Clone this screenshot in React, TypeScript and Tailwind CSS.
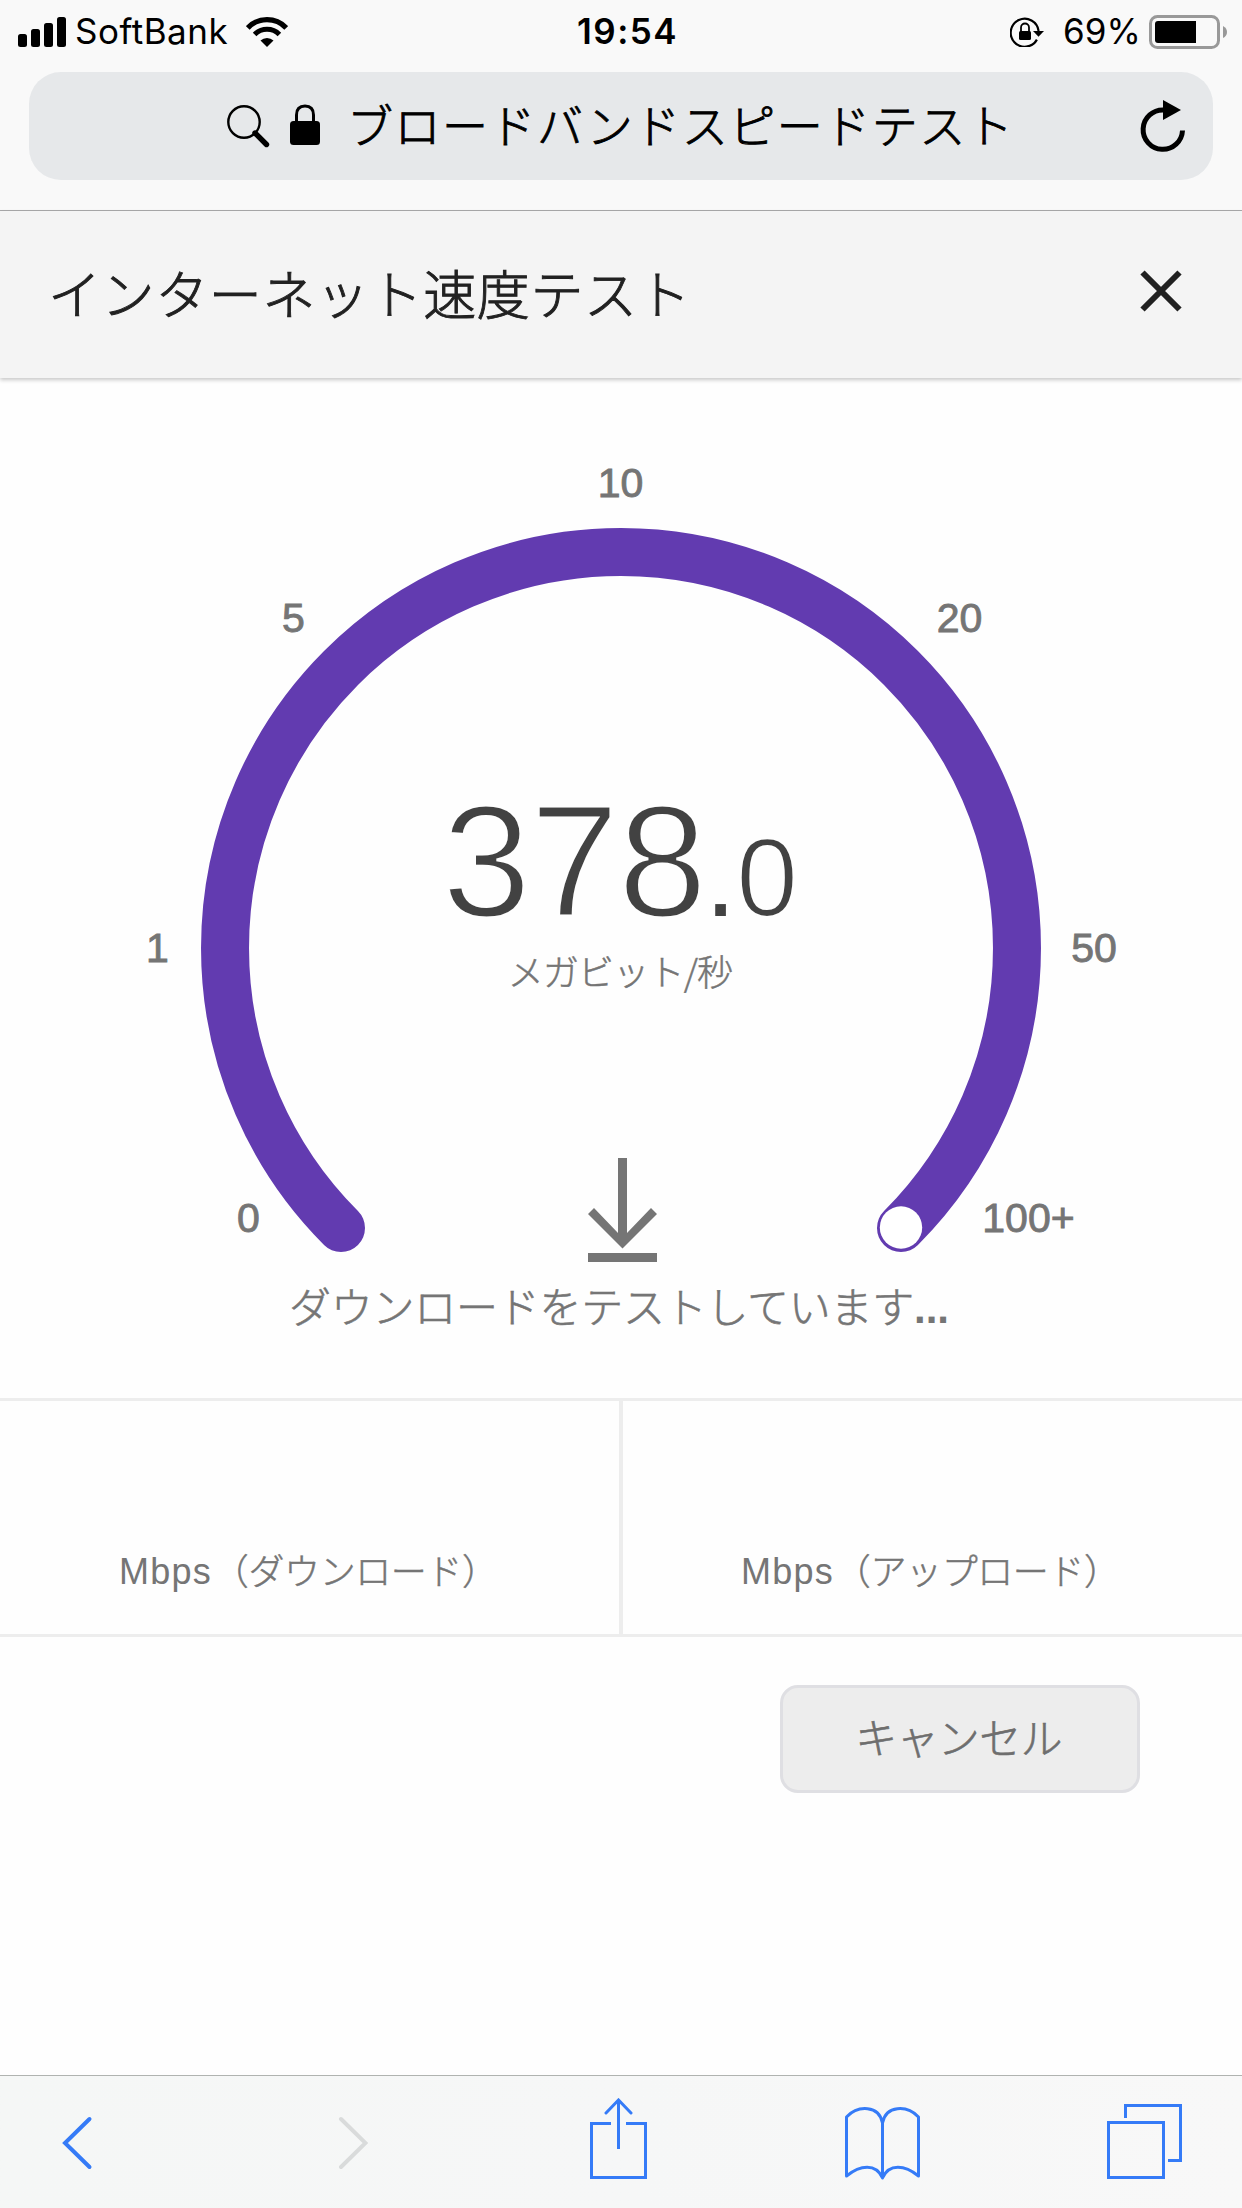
const TICKS = [
  { label: "0", x: 248.5, y: 854 },
  { label: "1", x: 157.5, y: 584 },
  { label: "5", x: 293.5, y: 254 },
  { label: "10", x: 620.5, y: 119 },
  { label: "20", x: 959.5, y: 254 },
  { label: "50", x: 1094, y: 584 },
  { label: "100+", x: 1028.5, y: 854 },
];

const RESULTS = [
  { id: "down", unit: "Mbps", name: "（ダウンロード）" },
  { id: "up", unit: "Mbps", name: "（アップロード）" },
];

function StatusBar() {
  return (
    <div className="flex h-[63px] items-center font-['Inter',sans-serif] text-[35px] leading-none text-black">
      <div className="flex w-[577px] items-center pl-[18px]">
        <svg width="48" height="30" viewBox="0 0 48 30">
          <rect x="0" y="17" width="9" height="13" rx="2.5" />
          <rect x="13" y="12" width="9" height="18" rx="2.5" />
          <rect x="26" y="6" width="9" height="24" rx="2.5" />
          <rect x="39" y="0" width="9" height="30" rx="2.5" />
        </svg>
        <span className="ml-[9px] w-[171px] whitespace-nowrap tracking-[0.5px]">SoftBank</span>
        <svg width="42" height="30" viewBox="0 0 42 30" fill="none" stroke="black">
          <path d="M1.8 10.9 A26.5 26.5 0 0 1 40.2 10.9" strokeWidth="5.2" />
          <path d="M8.6 17.4 A17.5 17.5 0 0 1 33.4 17.4" strokeWidth="5" />
          <path d="M14.5 23.6 A9.6 9.6 0 0 1 27.5 23.6 L21 30 Z" fill="black" stroke="none" />
        </svg>
      </div>
      <span className="w-[433px] whitespace-nowrap font-semibold tracking-[1.5px]">19:54</span>
      <svg width="36" height="30" viewBox="0 0 36 30">
        <path d="M26.9 22.6 A14 14 0 1 1 28.6 14" fill="none" stroke="black" strokeWidth="2.2" />
        <path d="M23 14 H34 L28.5 19.8 Z" />
        <rect x="9" y="14" width="12" height="9" rx="1.5" />
        <path d="M11 15 V10.5 A4 4 0 0 1 19 10.5 V15" fill="none" stroke="black" strokeWidth="1.8" />
      </svg>
      <span className="ml-[17px] w-[86px] whitespace-nowrap">69%</span>
      <svg width="80" height="34" viewBox="0 0 80 34">
        <rect x="1.5" y="1.5" width="68" height="31" rx="7" fill="none" stroke="#999999" strokeWidth="3" />
        <path d="M9 6 H47 V28 H9 Q6 28 6 25 V9 Q6 6 9 6 Z" />
        <path d="M74 11 Q78 13 78 17 Q78 21 74 23 Z" fill="#999999" />
      </svg>
    </div>
  );
}

function AddressBar() {
  return (
    <div className="mx-[29px] mt-[9px] flex h-[108px] items-center rounded-[32px] bg-[#e6e8ea]">
      <svg className="ml-[198px]" width="43" height="43" viewBox="0 0 43 43" fill="none" stroke="black">
        <circle cx="17" cy="17" r="15.7" strokeWidth="2.4" />
        <path d="M28 28 L39.5 39.5" strokeWidth="5.4" strokeLinecap="round" />
      </svg>
      <svg className="mb-[3px] ml-[20px]" width="30" height="42" viewBox="0 0 30 42">
        <path d="M6.5 20 V11 Q6.5 2 15 2 Q23.5 2 23.5 11 V20" fill="none" stroke="black" strokeWidth="3" />
        <rect x="0" y="17" width="30" height="24" rx="3.5" />
      </svg>
      <span className="mb-[6px] ml-[27px] w-[793px] whitespace-nowrap font-['Noto_Sans_CJK_JP',sans-serif] text-[46px] leading-[102px] font-light tracking-[1.5px] text-black [-webkit-text-stroke:0.9px_#000]">
        ブロードバンドスピードテスト
      </span>
      <svg className="shrink-0" width="48" height="54" viewBox="0 0 48 54">
        <path d="M42.5 31.5 A19.7 19.7 0 1 1 24 11" fill="none" stroke="black" strokeWidth="5" />
        <path d="M23 1 L41 11 L23 21 Z" />
      </svg>
    </div>
  );
}

function TestHeader() {
  return (
    <header className="relative flex h-[167px] items-center justify-between bg-[#f4f4f4] pr-[60px] pl-[48px] shadow-[0_2px_4px_rgba(0,0,0,0.22)]">
      <h1 className="mb-[5px] whitespace-nowrap font-['Noto_Sans_CJK_JP',sans-serif] text-[53px] leading-[160px] font-light tracking-[0.6px] text-[#212121] [-webkit-text-stroke:0.9px_#212121]">
        インターネット速度テスト
      </h1>
      <svg className="mb-[7px]" width="42" height="42" viewBox="0 0 42 42" stroke="#212121" strokeWidth="6">
        <path d="M2.5 2.5 L39.5 39.5 M39.5 2.5 L2.5 39.5" />
      </svg>
    </header>
  );
}

function Gauge() {
  return (
    <section className="grid h-[1020px]">
      <svg className="[grid-area:1/1]" width="1242" height="1020" viewBox="0 0 1242 1020">
        <path
          d="M341 850 A396 396 0 1 1 901 850"
          fill="none"
          stroke="#623bb0"
          strokeWidth="48"
          strokeLinecap="round"
        />
        <circle cx="901" cy="849.5" r="21.2" fill="#ffffff" />
        <g
          className="font-['Liberation_Sans',Arial,sans-serif] text-[41px]"
          fill="#757575"
          stroke="#757575"
          strokeWidth="0.9"
          textAnchor="middle"
        >
          {TICKS.map((tick) => (
            <text key={tick.label} x={tick.x} y={tick.y}>
              {tick.label}
            </text>
          ))}
        </g>
      </svg>

      {/* Readout inside the dial */}
      <div className="flex flex-col items-center [grid-area:1/1]">
        {/* the background-coloured stroke trims the digits down to a light weight */}
        <p className="mt-[403px] mr-[2px] flex h-[160px] items-baseline font-['Liberation_Sans',Arial,sans-serif] leading-[160px] text-[#424242] [-webkit-text-stroke-color:#fefefe]">
          <span className="text-[160px] tracking-[-1px] [-webkit-text-stroke-width:3px]">378</span>
          <span className="-ml-[1px] text-[112px]">.</span>
          <span className="text-[111px] [-webkit-text-stroke-width:2.2px]">0</span>
        </p>
        <p className="mt-[4px] mr-[2px] h-[50px] whitespace-nowrap font-['Noto_Sans_CJK_JP',sans-serif] text-[36px] leading-[50px] font-light tracking-[-0.8px] text-[#757575] [-webkit-text-stroke:0.5px_#757575]">
          メガビット/秒
        </p>
        <svg className="mt-[163px] ml-[3px]" width="69" height="104" viewBox="0 0 69 104" fill="#757575">
          <path d="M30 0 H39 V75 L63 50 L69 56 L34.5 90.5 L0 56 L6 50 L30 75 Z" />
          <rect x="0" y="95" width="69" height="9" />
        </svg>
        <p className="mt-[13px] mr-[4px] whitespace-nowrap font-['Noto_Sans_CJK_JP',sans-serif] text-[42px] leading-[60px] font-light tracking-[-0.25px] text-[#757575] [-webkit-text-stroke:0.6px_#757575]">
          ダウンロードをテストしています
          <span className="font-['Liberation_Sans',Arial,sans-serif] font-bold tracking-normal [-webkit-text-stroke-width:0px]">...</span>
        </p>
      </div>
    </section>
  );
}

function Results() {
  return (
    <div className="grid h-[239px] grid-cols-[623px_1fr] border-y-[3px] border-[#ededed] text-[36px] leading-[50px] text-[#757575]">
      {RESULTS.map((result) => (
        <div
          key={result.id}
          className="flex items-end border-[#ededed] pb-[37px] pl-[118px] whitespace-nowrap first:border-r-4 first:pl-[119px]"
        >
          <span className="font-['Liberation_Sans',Arial,sans-serif] tracking-[1.2px]">{result.unit}</span>
          <span className="mb-[3px] ml-[1px] font-['Noto_Sans_CJK_JP',sans-serif] font-light tracking-[-0.4px] [-webkit-text-stroke:0.5px_#757575]">
            {result.name}
          </span>
        </div>
      ))}
    </div>
  );
}

function Toolbar() {
  return (
    <nav className="flex h-[133px] items-start border-t border-[#b0b3b0] bg-linear-to-r from-[#f5f7f6] via-[#f6f7f7] to-[#f8f8f8] pt-[22px]">
      <svg className="mt-[18px] ml-[61px]" width="32" height="54" viewBox="0 0 32 54" fill="none" stroke="#357bf7" strokeWidth="4" strokeLinecap="round">
        <path d="M28.5 3 L4 27 L28.5 51" />
      </svg>
      <svg className="mt-[18px] ml-[243px]" width="32" height="54" viewBox="0 0 32 54" fill="none" stroke="#d9dbdb" strokeWidth="4" strokeLinecap="round">
        <path d="M5 3 L29.5 27 L5 51" />
      </svg>
      <svg className="ml-[222px]" width="57" height="82" viewBox="0 0 57 82" fill="none" stroke="#357bf7" strokeWidth="3">
        <path d="M21 25.5 H1.5 V79.5 H55.5 V25.5 H36" />
        <path d="M28.5 51 V2" />
        <path d="M16 15 L28.5 2 L41 15" strokeLinecap="round" />
      </svg>
      <svg className="mt-[9px] ml-[198px]" width="75" height="74" viewBox="0 0 75 74" fill="none" stroke="#357bf7" strokeWidth="3" strokeLinejoin="round">
        <path d="M37.5 16 C34 -2 13 -2 1.5 10 V69 C15 58 31 56 37.5 71 C44 56 60 58 73.5 69 V10 C62 -2 41 -2 37.5 16 Z" />
        <path d="M37.5 14 V71" />
      </svg>
      <svg className="mt-[6px] ml-[187px]" width="75" height="75" viewBox="0 0 75 75" fill="none" stroke="#357bf7" strokeWidth="3">
        <rect x="1.5" y="18.5" width="55" height="55" />
        <path d="M18.5 14 V1.5 H73.5 V56.5 H61" />
      </svg>
    </nav>
  );
}

export default function App() {
  return (
    <div className="flex h-[2208px] w-[1242px] flex-col overflow-hidden bg-[#fefefe]">
      <div className="h-[211px] shrink-0 border-b border-[#a9a9ab] bg-[#f9f9f9]">
        <StatusBar />
        <AddressBar />
      </div>
      <TestHeader />
      <Gauge />
      <Results />
      <div className="flex flex-1 justify-end pt-[48px] pr-[102px]">
        <button className="h-[108px] w-[360px] rounded-[18px] border-[3px] border-[#dfdfe3] bg-[#ededed] pr-[3px] pb-[7px] font-['Noto_Sans_CJK_JP',sans-serif] text-[42px] leading-[92px] font-light tracking-[-0.7px] text-[#6e6e6e] [-webkit-text-stroke:0.6px_#6e6e6e]">
          キャンセル
        </button>
      </div>
      <Toolbar />
    </div>
  );
}
